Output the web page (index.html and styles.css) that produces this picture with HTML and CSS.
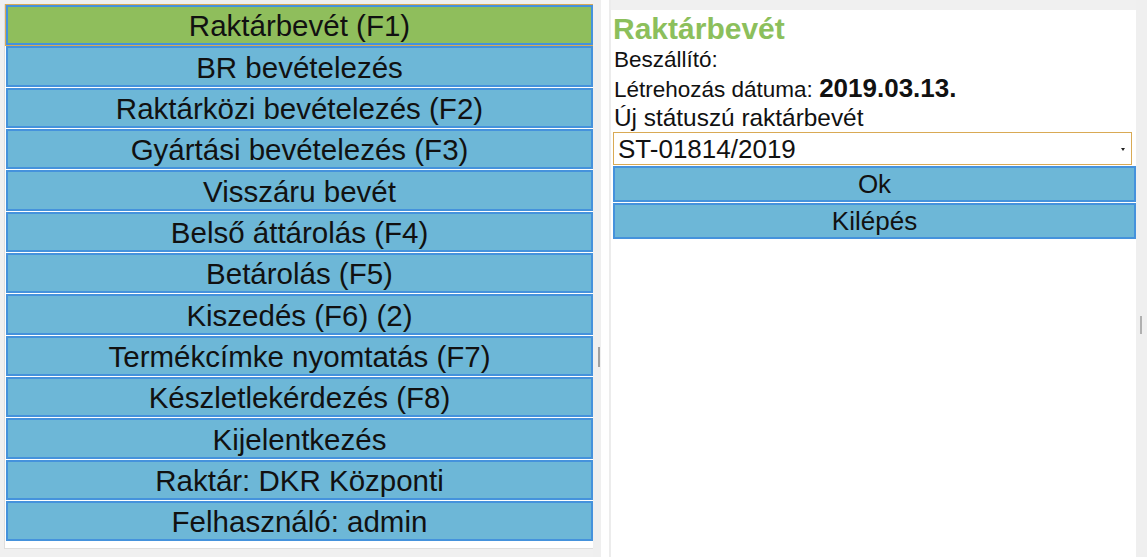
FILE: index.html
```html
<!DOCTYPE html>
<html lang="hu">
<head>
<meta charset="utf-8">
<title>Raktárbevét</title>
<link rel="stylesheet" href="styles.css">
</head>
<body>
<div class="app">
  <nav class="left-pane">
    <button class="menu-btn active">Raktárbevét (F1)</button>
    <button class="menu-btn">BR bevételezés</button>
    <button class="menu-btn">Raktárközi bevételezés (F2)</button>
    <button class="menu-btn">Gyártási bevételezés (F3)</button>
    <button class="menu-btn">Visszáru bevét</button>
    <button class="menu-btn">Belső áttárolás (F4)</button>
    <button class="menu-btn">Betárolás (F5)</button>
    <button class="menu-btn">Kiszedés (F6) (2)</button>
    <button class="menu-btn">Termékcímke nyomtatás (F7)</button>
    <button class="menu-btn">Készletlekérdezés (F8)</button>
    <button class="menu-btn">Kijelentkezés</button>
    <button class="menu-btn">Raktár: DKR Központi</button>
    <button class="menu-btn">Felhasználó: admin</button>
  </nav>
  <div class="splitter">
    <div class="split-gray"><span class="grip"></span></div>
    <div class="split-white"></div>
    <div class="split-edge"></div>
  </div>
  <main class="right-pane">
    <h1 class="title">Raktárbevét</h1>
    <div class="row row-supplier">Beszállító:</div>
    <div class="row row-date">Létrehozás dátuma: <b class="date">2019.03.13.</b></div>
    <div class="row row-status">Új státuszú raktárbevét</div>
    <div class="select">
      <span class="select-value">ST-01814/2019</span>
      <span class="select-arrow"></span>
    </div>
    <button class="form-btn">Ok</button>
    <button class="form-btn">Kilépés</button>
  </main>
  <div class="gutter"><span class="grip grip-right"></span></div>
</div>
</body>
</html>
```

FILE: styles.css
```css
* { box-sizing: border-box; }

html, body {
  margin: 0;
  padding: 0;
  background: #f0f0f0;
  font-family: "Liberation Sans", Arial, sans-serif;
  color: #111;
  overflow: hidden;
}

.app {
  display: flex;
  width: 1147px;
  height: 557px;
  align-items: flex-start;
}

.left-pane {
  margin-top: 4px;
  margin-left: 4px;
  width: 589px;
  height: 545px;
  background: #fff;
  border: 1px solid #dedede;
  border-right: none;
  display: flex;
  flex-direction: column;
  flex-shrink: 0;
}

.menu-btn {
  display: block;
  margin: 0 0 1px 1px;
  width: 587px;
  height: 40.33px;
  padding: 2px 0 0 0;
  background: #6db7d7;
  border: 2px solid #4592dc;
  font-family: "Liberation Sans", Arial, sans-serif;
  font-size: 29.5px;
  line-height: 1;
  color: #111;
  text-align: center;
  cursor: pointer;
  flex-shrink: 0;
}

.menu-btn.active {
  background: #8fbe5c;
  outline: 1px solid #d9aa55;
}

.splitter {
  display: flex;
  width: 18px;
  height: 557px;
  flex-shrink: 0;
}

.split-gray {
  width: 8px;
  background: #efefef;
  padding-top: 347px;
  padding-left: 5px;
}

.split-white {
  width: 8px;
  background: #fff;
}

.split-edge {
  width: 2px;
  background: #ececec;
}

.grip {
  display: block;
  width: 2px;
  height: 20px;
  background: #a0a0a0;
}

.right-pane {
  margin-top: 10px;
  width: 525px;
  height: 547px;
  background: #fff;
  padding-left: 2px;
  flex-shrink: 0;
}

.title {
  margin: 0;
  padding-top: 2px;
  font-size: 30px;
  line-height: 34px;
  font-weight: bold;
  color: #8cbf5c;
}

.row {
  margin: 0;
  padding-left: 1px;
}

.row-supplier {
  font-size: 22.5px;
  line-height: 28px;
}

.row-date {
  font-size: 22.5px;
  line-height: 28px;
}

.date {
  font-size: 26px;
  font-weight: bold;
}

.row-status {
  font-size: 24.4px;
  line-height: 27px;
  margin-bottom: 1px;
}

.select {
  display: flex;
  align-items: center;
  width: 519px;
  height: 33px;
  border: 1px solid #d9aa55;
  padding: 0 6px 0 4px;
  background: #fff;
}

.select-value {
  font-size: 26px;
  line-height: 1;
}

.select-arrow {
  margin-left: auto;
  width: 0;
  height: 0;
  border-left: 2.5px solid transparent;
  border-right: 2.5px solid transparent;
  border-top: 3px solid #222;
  margin-top: 2px;
}

.form-btn {
  display: block;
  width: 523px;
  height: 36px;
  margin: 1px 0 0 0;
  padding: 0;
  background: #6db7d7;
  border: 2px solid #4592dc;
  font-family: "Liberation Sans", Arial, sans-serif;
  font-size: 26px;
  line-height: 1;
  color: #111;
  text-align: center;
}

.gutter {
  width: 11px;
  height: 557px;
  background: #efefef;
  padding-top: 316px;
  padding-left: 4px;
  flex-shrink: 0;
}

.grip-right {
  height: 18px;
  background: #b0b0b0;
}
```
